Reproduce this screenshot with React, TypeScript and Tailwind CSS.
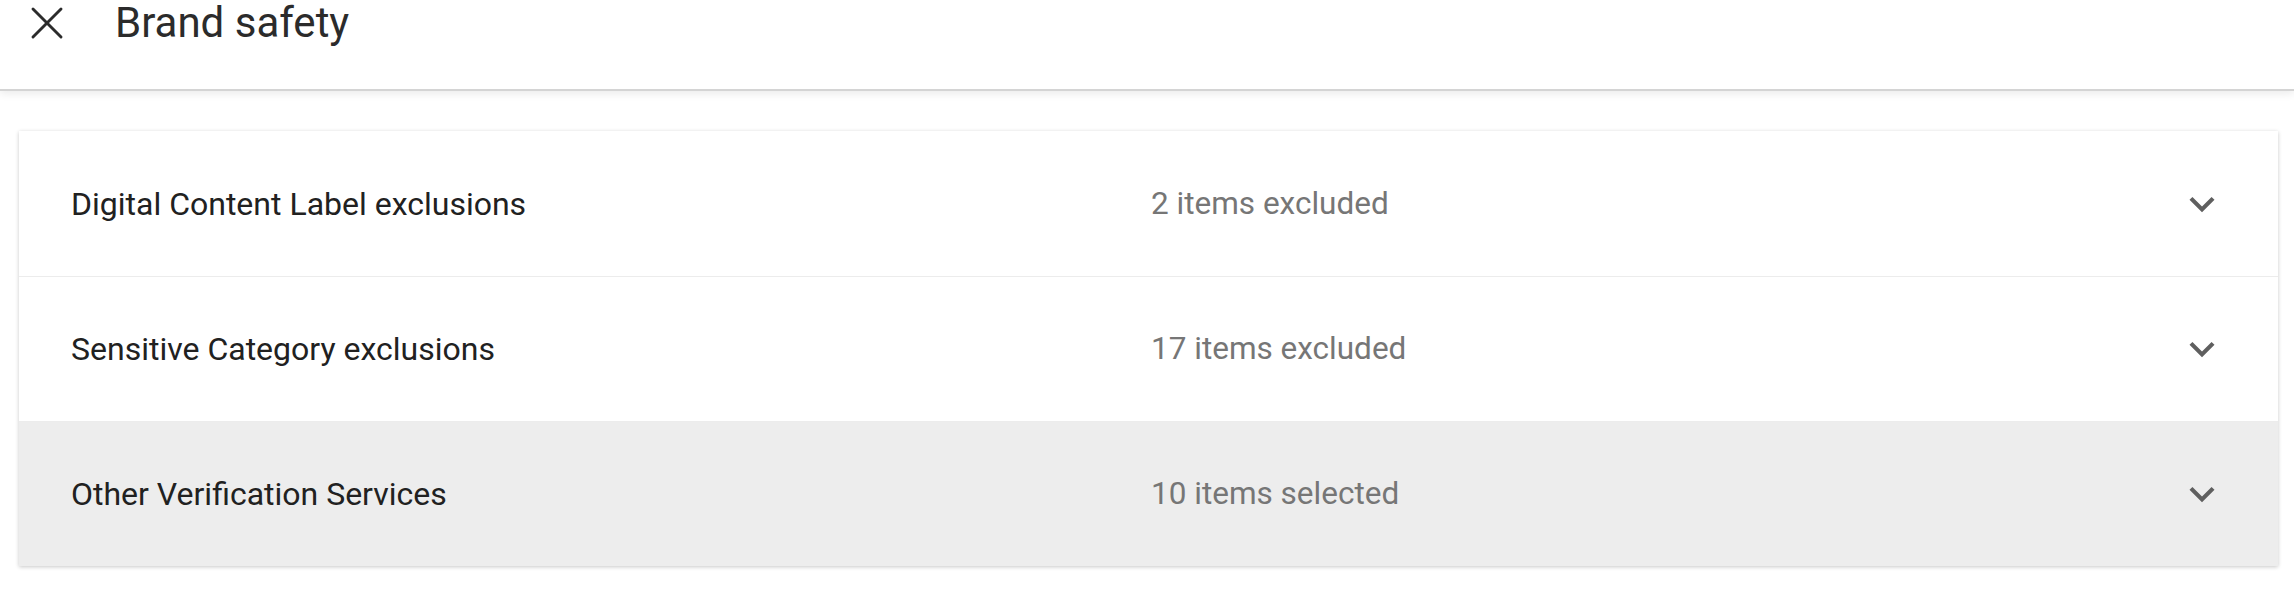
import { X } from 'lucide-react';

const rows = [
  { label: 'Digital Content Label exclusions', summary: '2 items excluded', active: false },
  { label: 'Sensitive Category exclusions', summary: '17 items excluded', active: false },
  { label: 'Other Verification Services', summary: '10 items selected', active: true },
];

function ExpandMore() {
  return (
    <svg viewBox="0 0 24 24" className="h-[50px] w-[50px] fill-[#5f5f5f]" aria-hidden="true">
      <path d="M16.59 8.59L12 13.17 7.41 8.59 6 10l6 6 6-6z" />
    </svg>
  );
}

export default function App() {
  return (
    <div className="min-h-screen bg-white font-['Roboto',sans-serif]">
      <header className="h-[91px] border-b-2 border-[#d4d4d4] bg-white shadow-[0_3px_8px_rgba(0,0,0,0.08)]">
        <div className="flex h-[46px] items-center">
          <button className="ml-[19px] flex h-[56px] w-[56px] items-center justify-center text-[#2b2b2b]">
            <X className="h-[56px] w-[56px]" strokeWidth={1.25} />
          </button>
          <h1 className="ml-[40px] text-[42px] leading-none text-[#2b2b2b]">Brand safety</h1>
        </div>
      </header>

      <div className="ml-[19px] mr-[16px] mt-[40px] bg-white shadow-[0_1px_4px_rgba(0,0,0,0.22)]">
        {rows.map((row, i) => (
          <div
            key={row.label}
            className={
              'flex h-[145px] items-center ' +
              (row.active ? 'bg-[#ededed] ' : 'bg-white ') +
              (i > 0 ? 'border-t border-[#ececec]' : '')
            }
          >
            <div className="w-[1132px] pl-[52px] text-[32px] text-[#212121]">{row.label}</div>
            <div className="flex-1 text-[31.5px] text-[#767676]">{row.summary}</div>
            <div className="mr-[51px]">
              <ExpandMore />
            </div>
          </div>
        ))}
      </div>
    </div>
  );
}
